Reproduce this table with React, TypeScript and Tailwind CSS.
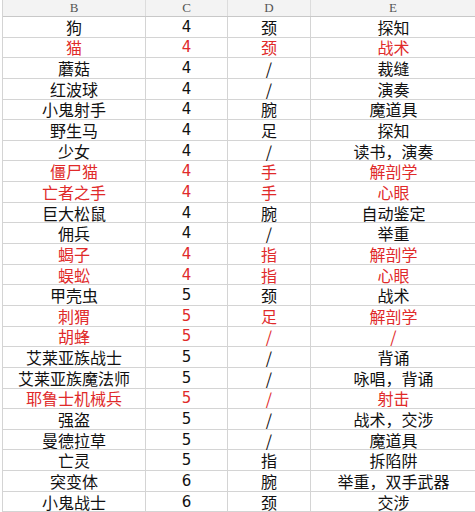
const rows: [string, string, string, string, boolean][] = [
  ['狗', '4', '颈', '探知', false],
  ['猫', '4', '颈', '战术', true],
  ['蘑菇', '4', '/', '裁缝', false],
  ['红波球', '4', '/', '演奏', false],
  ['小鬼射手', '4', '腕', '魔道具', false],
  ['野生马', '4', '足', '探知', false],
  ['少女', '4', '/', '读书，演奏', false],
  ['僵尸猫', '4', '手', '解剖学', true],
  ['亡者之手', '4', '手', '心眼', true],
  ['巨大松鼠', '4', '腕', '自动鉴定', false],
  ['佣兵', '4', '/', '举重', false],
  ['蝎子', '4', '指', '解剖学', true],
  ['蜈蚣', '4', '指', '心眼', true],
  ['甲壳虫', '5', '颈', '战术', false],
  ['刺猬', '5', '足', '解剖学', true],
  ['胡蜂', '5', '/', '/', true],
  ['艾莱亚族战士', '5', '/', '背诵', false],
  ['艾莱亚族魔法师', '5', '/', '咏唱，背诵', false],
  ['耶鲁士机械兵', '5', '/', '射击', true],
  ['强盗', '5', '/', '战术，交涉', false],
  ['曼德拉草', '5', '/', '魔道具', false],
  ['亡灵', '5', '指', '拆陷阱', false],
  ['突变体', '6', '腕', '举重，双手武器', false],
  ['小鬼战士', '6', '颈', '交涉', false],
];

const cols = 'grid grid-cols-[143px_82px_83px_165px] items-center';

export default function App() {
  return (
    <div className="w-[475px] h-[512px] overflow-hidden bg-white pl-[2px] font-['Noto_Sans_CJK_SC',sans-serif]">
      <div className="border-l border-[#d4d4d4]">
        {/* column header */}
        <div className={`${cols} h-[17px] bg-[#f3f3f3] border-b border-[#c8c8c8] text-[13px] leading-[16px] text-[#555] font-['Liberation_Serif',serif]`}>
          {['B', 'C', 'D', 'E'].map((h) => (
            <div key={h} className="h-full text-center border-r border-[#dcdcdc]">{h}</div>
          ))}
        </div>
        {rows.map(([b, c, d, e, red], i) => (
          <div
            key={i}
            className={`${cols} h-[20.65px] border-b border-[#d4d4d4] text-[16px] leading-[18px] ${red ? 'text-[#e02a2a]' : 'text-[#111]'}`}
          >
            <div className="h-full flex items-center justify-center border-r border-[#d4d4d4] whitespace-nowrap">{b}</div>
            <div className="h-full flex items-center justify-center border-r border-[#d4d4d4] font-['DejaVu_Sans',sans-serif] text-[15px]">{c}</div>
            <div className="h-full flex items-center justify-center border-r border-[#d4d4d4]">{d}</div>
            <div className="h-full flex items-center justify-center whitespace-nowrap">{e}</div>
          </div>
        ))}
      </div>
    </div>
  );
}
